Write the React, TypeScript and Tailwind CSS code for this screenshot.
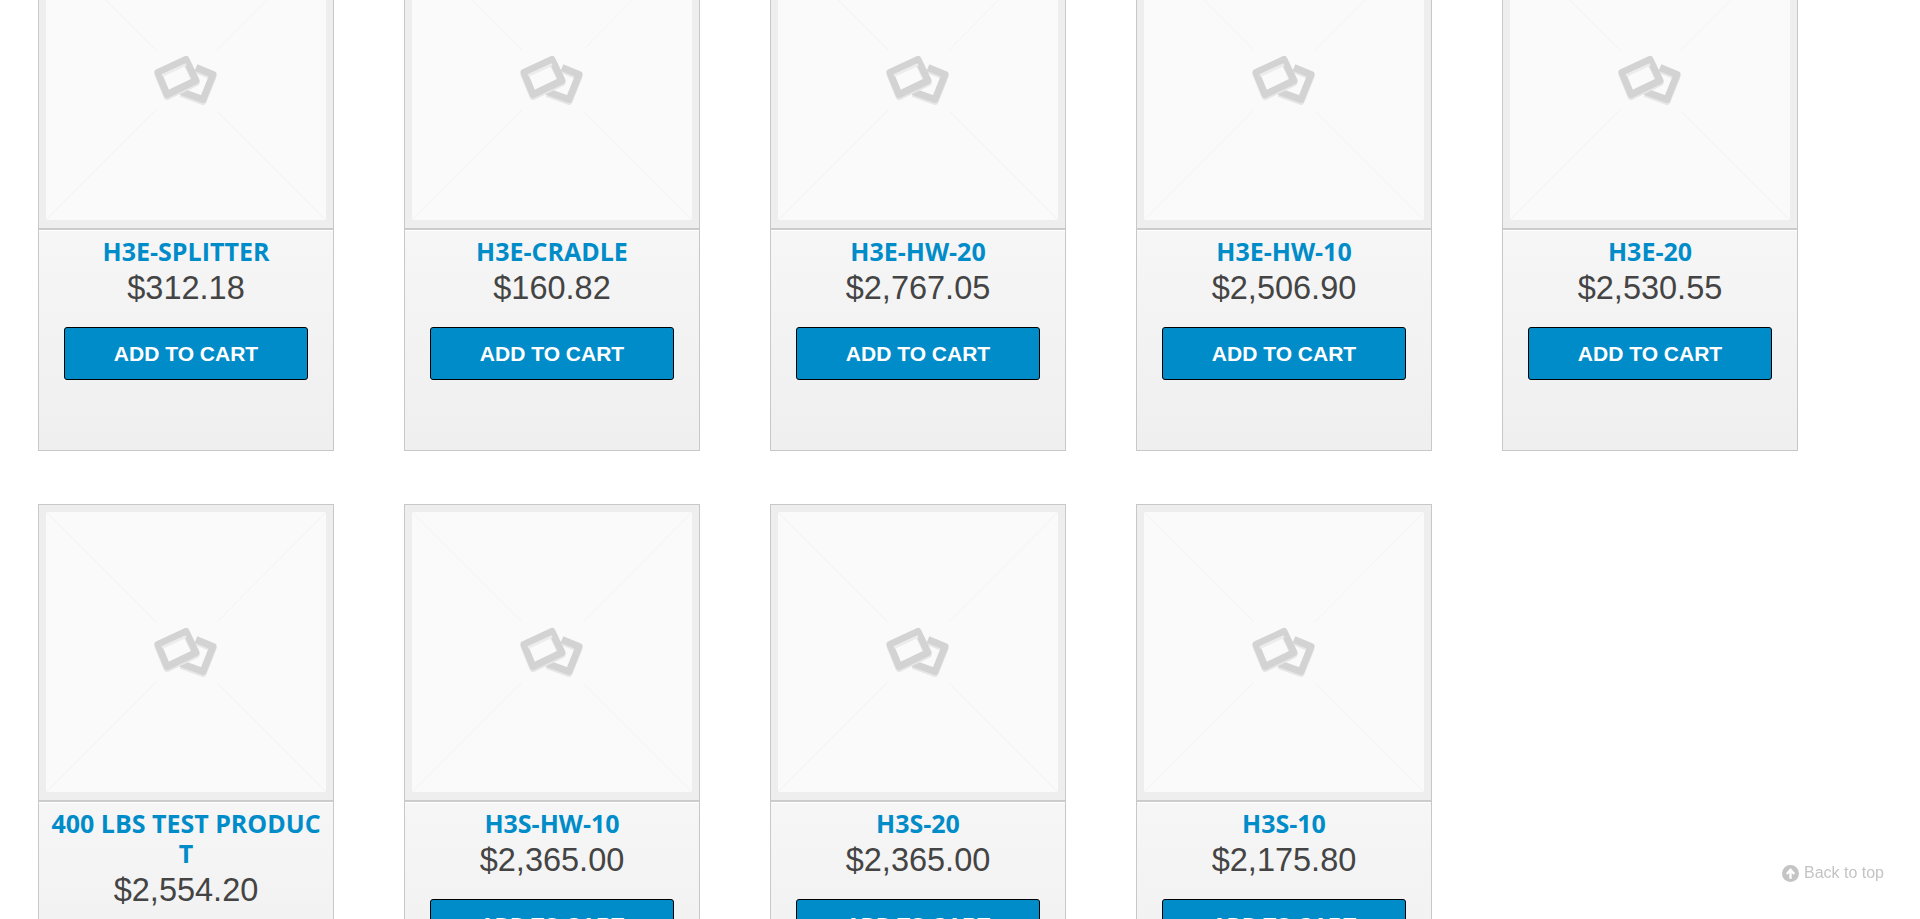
const products = [
  { name: 'H3E-SPLITTER', price: '$312.18' },
  { name: 'H3E-CRADLE', price: '$160.82' },
  { name: 'H3E-HW-20', price: '$2,767.05' },
  { name: 'H3E-HW-10', price: '$2,506.90' },
  { name: 'H3E-20', price: '$2,530.55' },
  { name: '400 LBS TEST PRODUCT', price: '$2,554.20' },
  { name: 'H3S-HW-10', price: '$2,365.00' },
  { name: 'H3S-20', price: '$2,365.00' },
  { name: 'H3S-10', price: '$2,175.80' },
];

function Placeholder() {
  return (
    <svg viewBox="0 0 280 280" className="block h-[280px] w-[280px] bg-[#fafafa]">
      <path d="M0 0L110 110M280 0L171 110M0 280L110 170M280 280L171 171" stroke="#f3f3f3" strokeWidth="1" fill="none" />
      <g fill="none" strokeLinejoin="round" strokeWidth="7" transform="translate(0 1.500)">
        {/* back slide */}
        <path d="M150 128L167 135L157 160L135 152" stroke="#e6e6e6" />
        <path d="M150 126L167 133L157 158L135 150" stroke="#d3d3d3" />
        {/* front slide */}
        <path d="M112 133L140 120L150 141L121 155Z" fill="#fafafa" stroke="#e6e6e6" />
        <path d="M112 131L140 118L150 139L121 153Z" stroke="#d3d3d3" />
        <path d="M116 134L140 123" stroke="#ececec" strokeWidth="3" />
      </g>
    </svg>
  );
}

function ProductCard({ name, price }: { name: string; price: string }) {
  return (
    <div className="flex w-[296px] flex-col border border-[#c8c8c8]">
      <div className="border-b-2 border-[#cccccc] bg-[#eeeeee] px-[7px] pb-[8px] pt-[7px]">
        <Placeholder />
      </div>
      <div className="flex min-h-[219.500px] flex-col items-center border-t border-white bg-gradient-to-b from-[#f6f6f6] to-[#efefef] px-[10px] pt-[5px]">
        <a className="w-full break-all text-center font-['Open_Sans',sans-serif] text-[25px] font-bold leading-[30px] text-[#008cc9]">
          {name}
        </a>
        <div className="mt-[2px] font-['Liberation_Sans',sans-serif] text-[32.500px] leading-[40px] text-[#444444]">{price}</div>
        <button className="mt-[19px] h-[53px] w-[244px] rounded-[3px] border border-black bg-[#008cc9] font-['Liberation_Sans',sans-serif] text-[21px] font-bold text-white">
          ADD TO CART
        </button>
      </div>
    </div>
  );
}

export default function App() {
  return (
    <div className="h-screen overflow-hidden bg-white">
      <div className="-mt-[68px] flex flex-wrap gap-x-[70px] gap-y-[53px] pl-[38px]">
        {products.map((p) => (
          <ProductCard key={p.name} name={p.name} price={p.price} />
        ))}
      </div>
      <a className="fixed bottom-[37px] right-[36px] flex items-center gap-[5px] font-['Liberation_Sans',sans-serif] text-[16px] leading-[18px] text-[#c4c4c4] blur-[0.4px]">
        <svg viewBox="0 0 16 16" className="h-[17px] w-[17px]">
          <circle cx="8" cy="8" r="8" fill="#c4c4c4" />
          <path d="M8 13V6M4.500 8.500L8 4.500L11.500 8.500" stroke="#fff" strokeWidth="2.200" fill="none" />
        </svg>
        Back to top
      </a>
    </div>
  );
}
